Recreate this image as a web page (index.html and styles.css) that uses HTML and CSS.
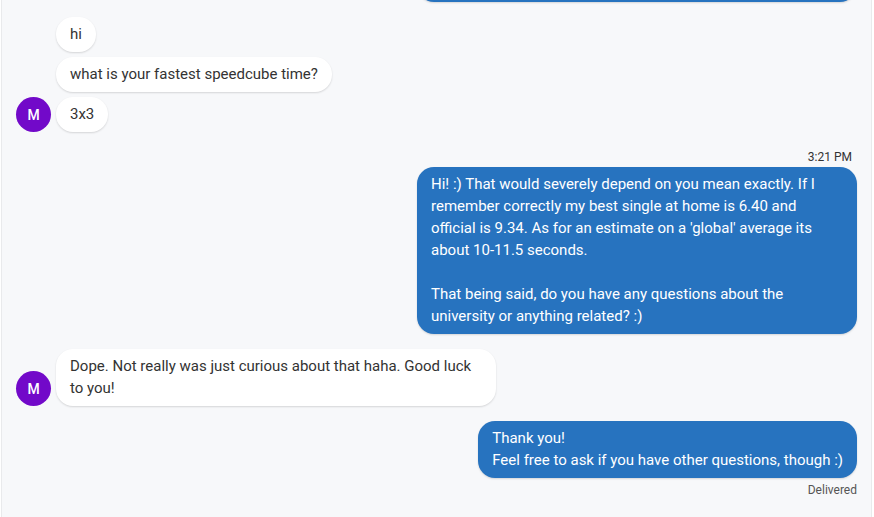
FILE: index.html
```html
<!DOCTYPE html>
<html lang="en">
<head>
<meta charset="utf-8">
<title>Conversation</title>
<link rel="stylesheet" href="styles.css">
</head>
<body>
<main class="thread">
  <div class="row row-out"><div class="bubble bubble-out bubble-cut"></div></div>

  <section class="group group-in first-group">
    <div class="row"><span class="avatar-slot"></span><div class="bubble bubble-in">hi</div></div>
    <div class="row"><span class="avatar-slot"></span><div class="bubble bubble-in">what is your fastest speedcube time?</div></div>
    <div class="row"><span class="avatar">M</span><div class="bubble bubble-in">3x3</div></div>
  </section>

  <section class="group group-out time-group">
    <div class="time">3:21 PM</div>
    <div class="bubble bubble-out wide">Hi! :) That would severely depend on you mean exactly. If I remember correctly my best single at home is 6.40 and official is 9.34. As for an estimate on a 'global' average its about 10-11.5 seconds.<br><br>That being said, do you have any questions about the university or anything related? :)</div>
  </section>

  <section class="group group-in gap-group">
    <div class="row"><span class="avatar">M</span><div class="bubble bubble-in wide-in">Dope. Not really was just curious about that haha. Good luck to you!</div></div>
  </section>

  <section class="group group-out gap-group">
    <div class="bubble bubble-out">Thank you!<br>Feel free to ask if you have other questions, though :)</div>
    <div class="status">Delivered</div>
  </section>
</main>
</body>
</html>
```

FILE: styles.css
```css
* { box-sizing: border-box; }
html, body { margin: 0; height: 100%; }
body { background: #fff; overflow: hidden; font-family: Roboto, "Liberation Sans", sans-serif; }
.thread {
  height: 517px;
  width: 871px;
  margin-left: 1px;
  border-left: 1px solid #e9eaec;
  border-right: 1px solid #e9eaec;
  background: #f7f8fa;
  display: flex;
  flex-direction: column;
  justify-content: flex-end;
  overflow: hidden;
  padding: 0 14px 19px 14px;
}
.row { display: flex; align-items: flex-end; gap: 5px; }
.row-out { justify-content: flex-end; flex-shrink: 0; }
.group { display: flex; flex-direction: column; gap: 5px; flex-shrink: 0; }
.group-out { align-items: flex-end; }
.first-group { margin-top: 15px; }
.time-group { margin-top: 18px; gap: 3px; }
.gap-group { margin-top: 15px; }
.avatar-slot, .avatar { width: 35px; height: 35px; flex: none; }
.avatar {
  border-radius: 50%;
  background: #7209c9;
  color: #fff;
  font-size: 14px;
  font-weight: 500;
  display: flex;
  align-items: center;
  justify-content: center;
}
.bubble {
  font-size: 15px;
  line-height: 22px;
  padding: 6px 14px 7px;
  border-radius: 17px;
  box-shadow: 0 1px 2px rgba(0, 0, 0, .14);
}
.bubble-in { background: #fff; color: #333; }
.bubble-out { background: #2773bf; color: #fff; }
.bubble-cut { width: 440px; height: 60px; }
.wide { width: 440px; }
.wide-in { width: 440px; }
.time { font-size: 12px; line-height: 14px; color: #333; padding-right: 5px; }
.status { font-size: 12px; line-height: 14px; color: #555; height: 15px; }
```
